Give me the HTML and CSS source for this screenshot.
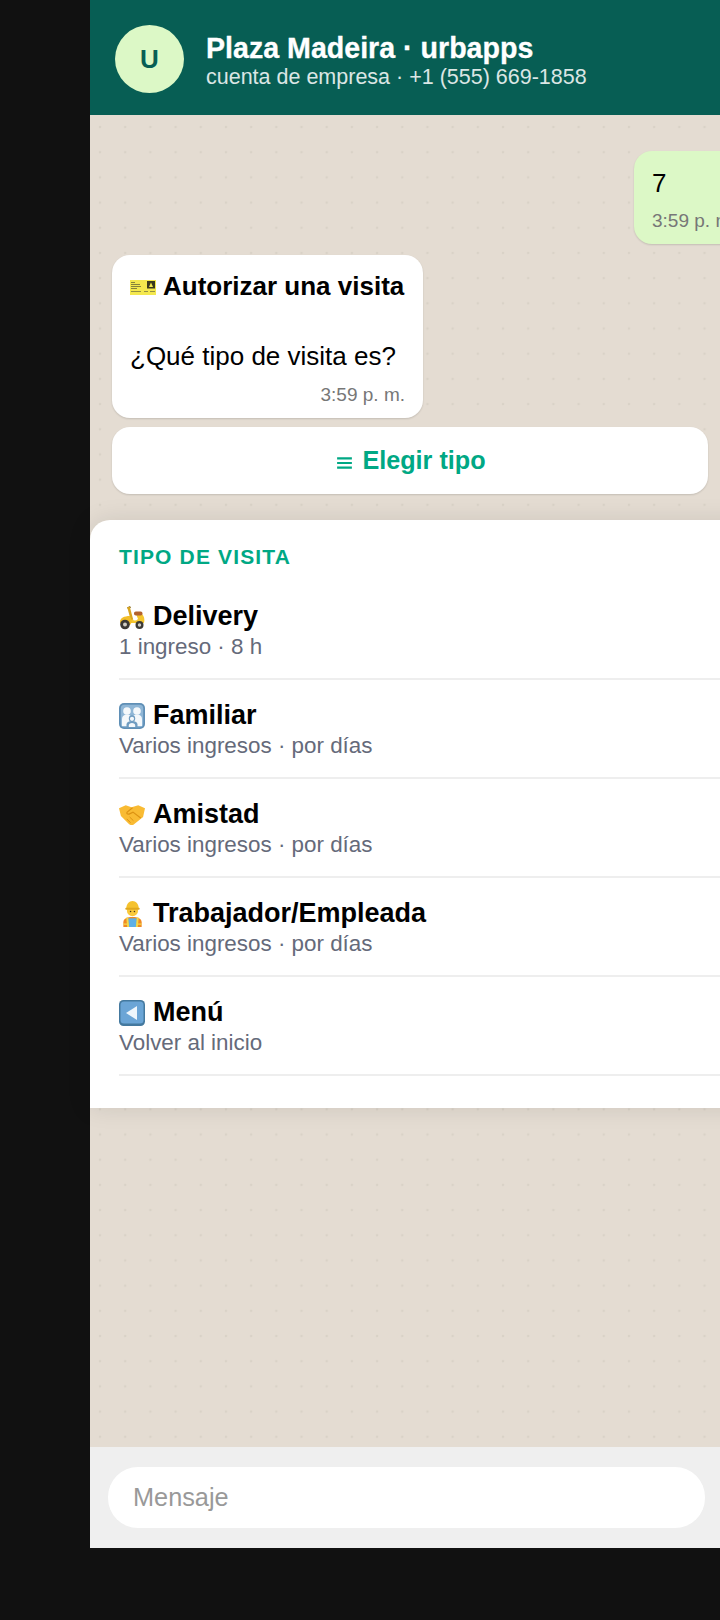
FILE: index.html
```html
<!DOCTYPE html>
<html lang="es">
<head>
<meta charset="utf-8">
<title>Plaza Madeira · urbapps</title>
<link rel="stylesheet" href="styles.css">
</head>
<body>
<div class="phone">
  <header class="header">
    <div class="avatar">U</div>
    <div class="header-text">
      <div class="header-title">Plaza Madeira · urbapps</div>
      <div class="header-sub">cuenta de empresa · +1 (555) 669-1858</div>
    </div>
  </header>
  <main class="chat">
    <div class="messages">
      <div class="bubble bubble-out">
        <div class="msg-text msg-out">7</div>
        <div class="time">3:59 p. m.</div>
      </div>
      <div class="bubble bubble-in">
        <div class="msg-text"><strong class="msg-title"><svg class="emoji-ticket" viewBox="0 0 26 15"><rect width="26" height="15" fill="#f4e84e"/><rect x="17" y="1" width="8" height="7.5" fill="#3b3a1e"/><path d="M21 2.500l2 4.500h-4z" fill="#f4e84e"/><path d="M1 2.500h4M1 4.500h9M1 6.500h10M1 8.500h6" stroke="#6a6836" stroke-width=".8"/><path d="M1 11.500h10M14 11.500h4M20 11.500h5" stroke="#8a8640" stroke-width=".9"/></svg>Autorizar una visita</strong></div>
        <div class="msg-text msg-gap">¿Qué tipo de visita es?</div>
        <div class="time">3:59 p. m.</div>
      </div>
      <div class="list-button"><svg class="list-icon" viewBox="0 0 16 13"><path d="M0 1.500h16M0 6.500h16M0 11.500h16" stroke="#00a884" stroke-width="2.200"/></svg>Elegir tipo</div>
    </div>
    <section class="sheet">
      <div class="sheet-title">TIPO DE VISITA</div>
      <div class="row">
        <div class="row-title"><svg class="emoji" viewBox="0 0 26 26"><path d="M8 3.500l3-1.500 1 1.800-3 1.200z" fill="#8a6a22"/><path d="M9.500 3l3.500 13" stroke="#d9a51f" stroke-width="2.600"/><path d="M13 15c2 2 4 2 6 0l-2-5h6c2 2 3 5 2 9H10z" fill="#f5c62e"/><rect x="15" y="7.500" width="8.500" height="4" rx="1.800" fill="#b4632d"/><path d="M1 18c0-4 4-6 10-6l2 6-2 3H2z" fill="#f2bd27"/><circle cx="6" cy="20.500" r="4.800" fill="#3b3935"/><circle cx="6" cy="20.500" r="2" fill="#d0cdc4"/><circle cx="20.500" cy="21" r="4" fill="#3b3935"/><circle cx="20.500" cy="21" r="1.700" fill="#d0cdc4"/></svg>Delivery</div>
        <div class="row-sub">1 ingreso · 8 h</div>
      </div>
      <div class="row">
        <div class="row-title"><svg class="emoji" viewBox="0 0 26 26"><rect width="26" height="26" rx="5" fill="#5f8fb6"/><rect x="1.800" y="1.800" width="22.400" height="22.400" rx="3.500" fill="#8fb6d6"/><circle cx="8" cy="8" r="3.800" fill="#f4f8fb"/><circle cx="18" cy="8" r="3.800" fill="#f4f8fb"/><path d="M3 23v-7c0-3 2-4.500 5-4.500s5 1.500 5 4.500c0-3 2-4.500 5-4.500s5 1.500 5 4.500v7z" fill="#f4f8fb"/><path d="M7.500 24v-2.500c0-2 2-3.500 5.500-3.500s5.500 1.500 5.500 3.500V24z" fill="#6f9cc1"/><circle cx="13" cy="15.500" r="3.200" fill="#6f9cc1"/><circle cx="13" cy="15.800" r="2.100" fill="#f4f8fb"/><path d="M9.800 24v-1.500c0-1.200 1.200-2.500 3.200-2.500s3.200 1.300 3.200 2.500V24z" fill="#f4f8fb"/></svg>Familiar</div>
        <div class="row-sub">Varios ingresos · por días</div>
      </div>
      <div class="row">
        <div class="row-title"><svg class="emoji" viewBox="0 0 27 26"><path d="M0 6l7-3 6 2 7-2 7 3-2 9-10 8c-2 1-4 0-5-1L2 14z" fill="#f9bb33"/><path d="M14 5.500L8.500 10c-1 1 0 2.500 2 2l4-2 8 6" fill="none" stroke="#dc9212" stroke-width="1.300"/><path d="M8 17l4 4M11 15l4 4" stroke="#dc9212" stroke-width="1"/></svg>Amistad</div>
        <div class="row-sub">Varios ingresos · por días</div>
      </div>
      <div class="row">
        <div class="row-title"><svg class="emoji emoji-worker" viewBox="0 0 19 27"><circle cx="9.500" cy="10" r="5.800" fill="#fac93c"/><path d="M3 8c0-5 3-8 6.500-8S16 3 16 8z" fill="#f5c22e"/><rect x="2" y="7" width="15" height="2" rx="1" fill="#e0a81e"/><circle cx="7.500" cy="11" r=".8" fill="#4b3a1a"/><circle cx="11.500" cy="11" r=".8" fill="#4b3a1a"/><path d="M0 27v-5c0-4 4-5.500 9.500-5.500S19 18 19 22v5z" fill="#f08a24"/><rect x="5" y="18" width="9" height="9" fill="#5fb0e6"/><path d="M4 17l1 10M15 17l-1 10" stroke="#f4d84a" stroke-width="2"/><path d="M0 24h5M14 24h5" stroke="#f4d84a" stroke-width="1.500"/></svg>Trabajador/Empleada</div>
        <div class="row-sub">Varios ingresos · por días</div>
      </div>
      <div class="row">
        <div class="row-title"><svg class="emoji" viewBox="0 0 26 26"><rect width="26" height="26" rx="4.500" fill="#44799f"/><rect x="1.500" y="1.500" width="23" height="22" rx="3.500" fill="#6ba5d6"/><path d="M18 6v14L7 13z" fill="#eef6fc"/></svg>Menú</div>
        <div class="row-sub">Volver al inicio</div>
      </div>
    </section>
  </main>
  <footer class="footer">
    <div class="input">Mensaje</div>
  </footer>
</div>
</body>
</html>
```

FILE: styles.css
```css
* { box-sizing: border-box; }
html, body { height: 100%; }
body {
  margin: 0;
  background: #111111;
  overflow: hidden;
  font-family: "Liberation Sans", Arial, sans-serif;
  color: #000;
}
.phone {
  margin-left: 90px;
  width: 700px;
  height: 1548px;
  display: flex;
  flex-direction: column;
}
.header {
  height: 115px;
  flex: none;
  background: #075e54;
  padding: 25px 25px 0;
  display: flex;
  align-items: flex-start;
  gap: 22px;
  color: #fff;
}
.avatar {
  width: 69px;
  height: 68px;
  border-radius: 50%;
  background: #dcf8c6;
  color: #075e54;
  font-weight: 700;
  font-size: 26px;
  display: flex;
  align-items: center;
  justify-content: center;
}
.header-title { font-size: 28.600px; font-weight: 700; line-height: 34px; margin-top: 6px; -webkit-text-stroke: .3px #fff; }
.header-sub { font-size: 21.500px; line-height: 24px; opacity: .85; }
.chat {
  flex: 1;
  background-color: #e4dcd2;
  background-image: radial-gradient(circle, #d9d2c7 1.100px, transparent 1.600px);
  background-size: 25.200px 25.200px;
  background-position: -2.600px -0.600px;
}
.messages {
  padding: 36px 22px 26px;
  display: flex;
  flex-direction: column;
  align-items: flex-start;
}
.bubble {
  border-radius: 18px;
  padding: 14px 18px 10px;
  box-shadow: 0 1px 2px rgba(0,0,0,.14);
}
.bubble-out {
  background: #dcf8c6;
  align-self: flex-end;
  width: 134px;
  height: 93px;
  margin-bottom: 11px;
}
.bubble-in {
  background: #fff;
  width: 311px;
  height: 163px;
  margin-bottom: 9px;
}
.msg-text { font-size: 26px; line-height: 35px; }
.msg-out { margin-top: 1px; margin-bottom: -1px; }
.msg-title { font-weight: 700; display: block; white-space: nowrap; }
.msg-gap { margin-top: 35px; }
.emoji-ticket { width: 26px; height: 15px; margin-right: 7px; }
.time {
  font-size: 19px;
  line-height: 22px;
  color: #777;
  margin-top: 10px;
  white-space: nowrap;
}
.bubble-in .time { text-align: right; }
.list-button {
  width: 596px;
  height: 67px;
  padding-left: 3px;
  background: #fff;
  border-radius: 18px;
  box-shadow: 0 1px 2px rgba(0,0,0,.14);
  display: flex;
  align-items: center;
  justify-content: center;
  color: #00a884;
  font-size: 25.200px;
  font-weight: 700;
}
.list-icon { width: 15px; height: 12px; margin-right: 10px; margin-top: 5px; }
.sheet {
  background: #fff;
  border-radius: 20px 20px 0 0;
  padding: 25px 29px 32px;
  box-shadow: 0 0 24px rgba(0,0,0,.1);
}
.sheet-title {
  color: #00a884;
  font-size: 21px;
  font-weight: 700;
  letter-spacing: 1.150px;
  line-height: 23px;
  margin-bottom: 13px;
}
.row {
  height: 99px;
  border-bottom: 2px solid #eeeeee;
  padding-top: 18px;
}
.row-title { font-size: 27px; font-weight: 700; line-height: 35px; display: flex; align-items: center; }
.row-sub { font-size: 22.400px; line-height: 26px; color: #656a7a; }
.emoji { width: 26px; height: 26px; margin-right: 8px; flex: none; }
.emoji-worker { width: 19px; margin-left: 4px; margin-right: 11px; }
.footer {
  height: 101px;
  flex: none;
  background: #efefef;
  padding: 20px 18px;
}
.input {
  width: 597px;
  height: 61px;
  background: #fff;
  border-radius: 30px;
  padding: 0 25px;
  display: flex;
  align-items: center;
  color: #999;
  font-size: 25.300px;
}
```
